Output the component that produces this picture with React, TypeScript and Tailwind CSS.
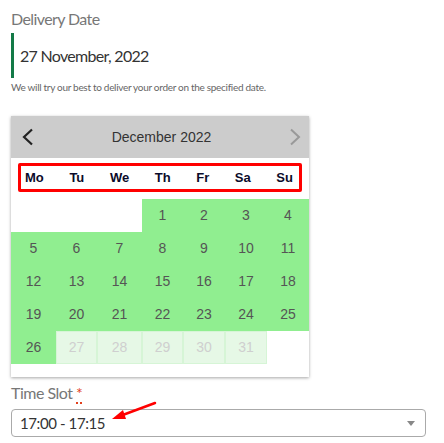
const days = ['Mo', 'Tu', 'We', 'Th', 'Fr', 'Sa', 'Su'];

type Cell = { n?: number; off?: boolean };

const cells: Cell[] = [
  {}, {}, {},
  ...Array.from({ length: 31 }, (_, i) => ({ n: i + 1, off: i + 1 > 26 })),
  {},
];

export default function App() {
  const rows: Cell[][] = [];
  for (let i = 0; i < cells.length; i += 7) rows.push(cells.slice(i, i + 7));

  return (
    <div className="relative w-[444px] h-[443px] bg-white overflow-hidden px-[11px] pt-[8px] font-['Lato','Open_Sans',sans-serif]">
      <div className="text-[16px] leading-[22px] tracking-[-0.6px] text-[#777]">Delivery Date</div>

      <div className="mt-[3px] border-l-[3px] border-[#137a47] h-[45px] flex items-center pl-[6px]">
        <span className="text-[16px] tracking-[-0.7px] text-[#333]">27 November, 2022</span>
      </div>

      <p className="mt-[2px] text-[10px] leading-[14px] tracking-[-0.3px] text-[#666]">
        We will try our best to deliver your order on the specified date.
      </p>

      <div className="mt-[22px] w-[298px] bg-white shadow-[0_1px_3px_rgba(0,0,0,0.35)] font-['Liberation_Sans',Arial,sans-serif] pb-[13px]">
        <div className="h-[42px] bg-[#cccccc] flex items-center justify-between pl-[10px] pr-[7px]">
          <svg width="13" height="18" viewBox="0 0 13 18">
            <polyline points="11,1.5 3,9 11,16.5" fill="none" stroke="#222" strokeWidth="2.2" />
          </svg>
          <span className="text-[14px] text-[#333]">December 2022</span>
          <svg width="13" height="18" viewBox="0 0 13 18">
            <polyline points="2,1.5 10,9 2,16.5" fill="none" stroke="#999" strokeWidth="2" />
          </svg>
        </div>

        <div className="mx-[7px] mt-[5px] mb-[7px] h-[29px] border-[3px] border-[#f00] rounded-[2px] flex items-center justify-between pl-[4px] pr-[6px]">
          {days.map((d) => (
            <span key={d} className="text-[13px] font-bold text-[#0b0b2a]">
              {d}
            </span>
          ))}
        </div>

        <div className="flex flex-col">
          {rows.map((row, ri) => (
            <div key={ri} className="grid grid-cols-[45px_41px_45px_41px_42px_42px_42px] h-[33px]">
              {row.map((c, ci) =>
                c.n === undefined ? (
                  <div key={ci} />
                ) : c.off ? (
                  <div
                    key={ci}
                    className="flex items-center justify-center bg-[#e6f8e6] border border-[#d6f5d6] text-[14px] text-[#cfcfcf]"
                  >
                    {c.n}
                  </div>
                ) : (
                  <div key={ci} className="flex items-center justify-center bg-[#90ee90] text-[14px] text-[#555]">
                    {c.n}
                  </div>
                )
              )}
            </div>
          ))}
        </div>
      </div>

      <div className="mt-[5px] text-[16px] leading-[22px] tracking-[-0.5px] text-[#777]">
        Time Slot{' '}
        <abbr className="text-[#e2401c] no-underline border-b-2 border-dotted border-[#e2401c]" title="required">
          *
        </abbr>
      </div>

      <div className="mt-[5px] w-[415px] h-[28px] border border-[#aaa] rounded-[4px] flex items-center justify-between pl-[8px] pr-[10px]">
        <span className="text-[15px] tracking-[-0.4px] text-[#333]">17:00 - 17:15</span>
        <span className="w-0 h-0 border-l-[4px] border-r-[4px] border-t-[5px] border-l-transparent border-r-transparent border-t-[#888]" />
      </div>

      <svg className="absolute left-[108px] top-[398px]" width="52" height="26" viewBox="0 0 52 26">
        <line x1="47" y1="5" x2="12" y2="18" stroke="#f00" strokeWidth="2.5" strokeLinecap="round" />
        <polygon points="4,21 15,12 18,21" fill="#f00" />
      </svg>
    </div>
  );
}
